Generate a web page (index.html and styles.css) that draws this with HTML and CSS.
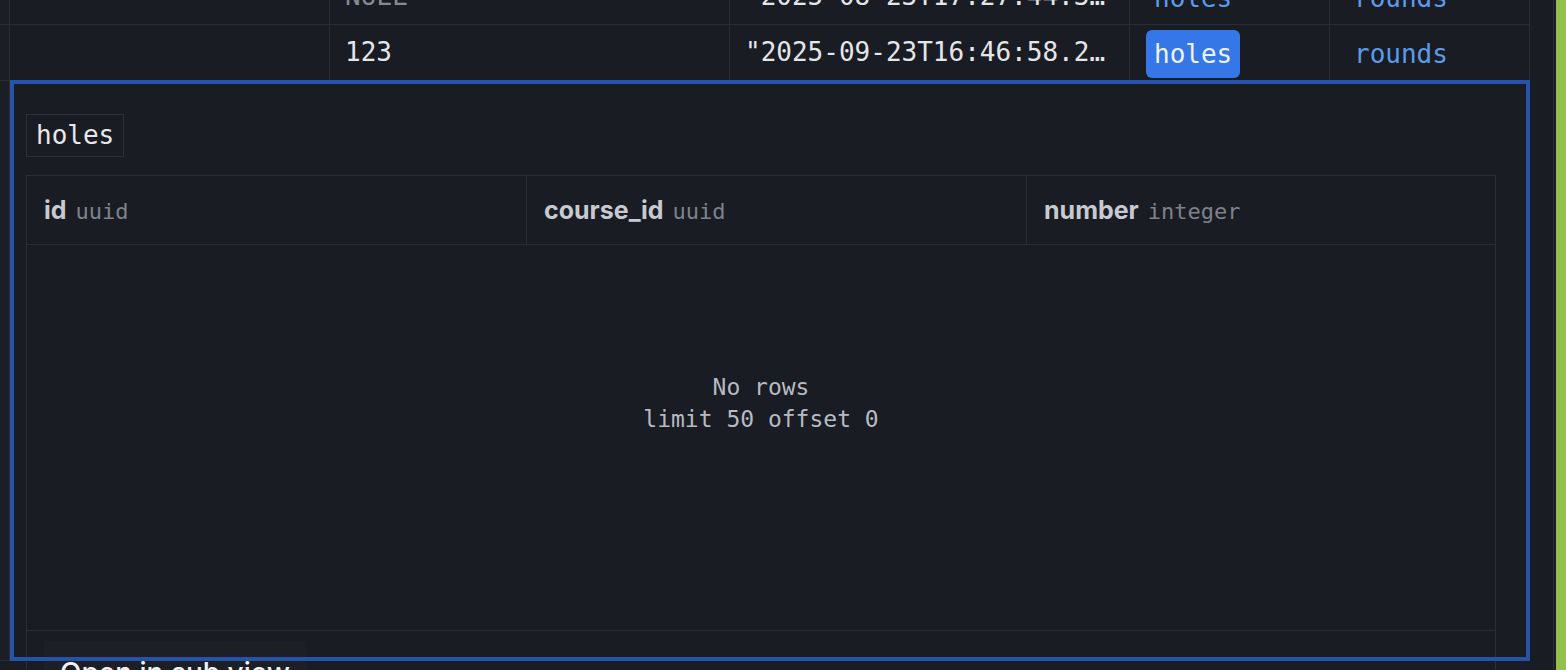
FILE: index.html
```html
<!DOCTYPE html>
<html lang="en">
<head>
<meta charset="utf-8">
<title>holes</title>
<link rel="stylesheet" href="styles.css">
</head>
<body>
<div class="app">
  <div class="main">
    <div class="row row-first">
      <div class="cell gutter"></div>
      <div class="cell"></div>
      <div class="cell null">NULL</div>
      <div class="cell">"2025-08-23T17:27:44.312Z"</div>
      <div class="cell link-cell"><span class="link">holes</span></div>
      <div class="cell link-cell"><span class="link">rounds</span></div>
    </div>
    <div class="row">
      <div class="cell gutter"></div>
      <div class="cell"></div>
      <div class="cell">123</div>
      <div class="cell">"2025-09-23T16:46:58.245Z"</div>
      <div class="cell link-cell"><span class="link active">holes</span></div>
      <div class="cell link-cell"><span class="link">rounds</span></div>
    </div>
    <div class="row row-expanded">
      <div class="gutter-tall"></div>
      <div class="panel">
        <div class="panel-head"><span class="tag">holes</span></div>
        <div class="subtable">
          <div class="sub-header">
            <div class="hcell"><span class="col-name">id</span><span class="col-type">uuid</span></div>
            <div class="hcell"><span class="col-name">course_id</span><span class="col-type">uuid</span></div>
            <div class="hcell"><span class="col-name">number</span><span class="col-type">integer</span></div>
          </div>
          <div class="sub-body">
            <div class="empty">No rows</div>
            <div class="empty">limit 50 offset 0</div>
          </div>
          <div class="sub-footer">
            <div class="menu-btn">Open in sub view</div>
          </div>
        </div>
      </div>
    </div>
  </div>
  <div class="rail">
    <div class="rail-line"></div>
    <div class="rail-thumb"></div>
  </div>
</div>
</body>
</html>
```

FILE: styles.css
```css
html, body {
  margin: 0;
  padding: 0;
  background: #1a1c23;
  height: 670px;
  overflow: hidden;
}

.app {
  display: flex;
  height: 670px;
  overflow: hidden;
}

.main {
  width: 1530px;
  flex: none;
  height: 670px;
  overflow: hidden;
}

.row {
  display: grid;
  grid-template-columns: 10px 320px 400px 400px 200px 200px;
}

.row-first {
  margin-top: -31px;
}

.cell {
  box-sizing: border-box;
  height: 56px;
  border-right: 1px solid #2a2d35;
  border-bottom: 1px solid #2a2d35;
  padding: 0 15px;
  font-family: "DejaVu Sans Mono", "Liberation Mono", monospace;
  font-size: 26px;
  line-height: 55px;
  color: #e4e6ea;
  white-space: nowrap;
  overflow: hidden;
  text-overflow: ellipsis;
}

.cell.gutter {
  padding: 0;
  background: #1c1e25;
}

.cell.null {
  color: #858a93;
}

.cell.link-cell {
  padding: 0 16px;
}

.link {
  display: inline-block;
  vertical-align: middle;
  padding: 8px 8px;
  line-height: 32px;
  border-radius: 6px;
  color: #5c9bea;
}

.link.active {
  background: #3577e6;
  color: #eef3fb;
}

.row-expanded {
  position: relative;
}

.gutter-tall {
  box-sizing: border-box;
  height: 580px;
  background: #1c1e25;
  border-right: 1px solid #2a2d35;
  border-bottom: 1px solid #2a2d35;
}

.panel {
  grid-column: 2 / 7;
  position: relative;
  box-sizing: border-box;
  height: 581px;
  margin-top: -1px;
  padding: 34px 34px 0 16px;
}

.panel::after {
  content: "";
  position: absolute;
  left: 0;
  top: 0;
  right: 0;
  bottom: 0;
  border: 4px solid #2553a8;
  z-index: 2;
  pointer-events: none;
}

.panel-head {
  display: flex;
}

.tag {
  display: block;
  border: 1px solid #2d3039;
  padding: 5px 9px;
  line-height: 31px;
  font-family: "DejaVu Sans Mono", "Liberation Mono", monospace;
  font-size: 26px;
  color: #e6e8ec;
}

.subtable {
  margin-top: 18px;
  border: 1px solid #2a2d35;
  overflow: hidden;
  height: 560px;
}

.sub-header {
  display: flex;
  height: 69px;
  box-sizing: border-box;
  border-bottom: 1px solid #2a2d35;
}

.hcell {
  flex: none;
  box-sizing: border-box;
  width: 500px;
  border-right: 1px solid #2a2d35;
  padding-left: 17px;
  display: flex;
  align-items: center;
  gap: 9px;
}

.col-name {
  font-family: Inter, "Noto Sans", sans-serif;
  font-weight: 700;
  font-size: 25px;
  color: #c7cad1;
}

.col-type {
  font-family: "DejaVu Sans Mono", "Liberation Mono", monospace;
  font-size: 22px;
  color: #7d828b;
  padding-top: 3px;
}

.sub-body {
  box-sizing: border-box;
  height: 386px;
  padding-top: 126px;
  border-bottom: 1px solid #2a2d35;
  text-align: center;
}

.empty {
  font-family: "DejaVu Sans Mono", "Liberation Mono", monospace;
  font-size: 23px;
  line-height: 32px;
  color: #b6bac2;
}

.sub-footer {
  padding: 10px 17px;
  display: flex;
}

.menu-btn {
  background: #1d1f27;
  padding: 15px 16px 9px;
  font-family: Inter, "Noto Sans", sans-serif;
  font-weight: 500;
  font-size: 28px;
  line-height: 34px;
  color: #f1f2f4;
}

.rail {
  flex: none;
  width: 36px;
  display: flex;
  padding-left: 23px;
  box-sizing: border-box;
}

.rail-line {
  width: 1px;
  background: #2e3139;
  margin-right: 2px;
}

.rail-thumb {
  width: 10px;
  background: #95c14b;
}
```
